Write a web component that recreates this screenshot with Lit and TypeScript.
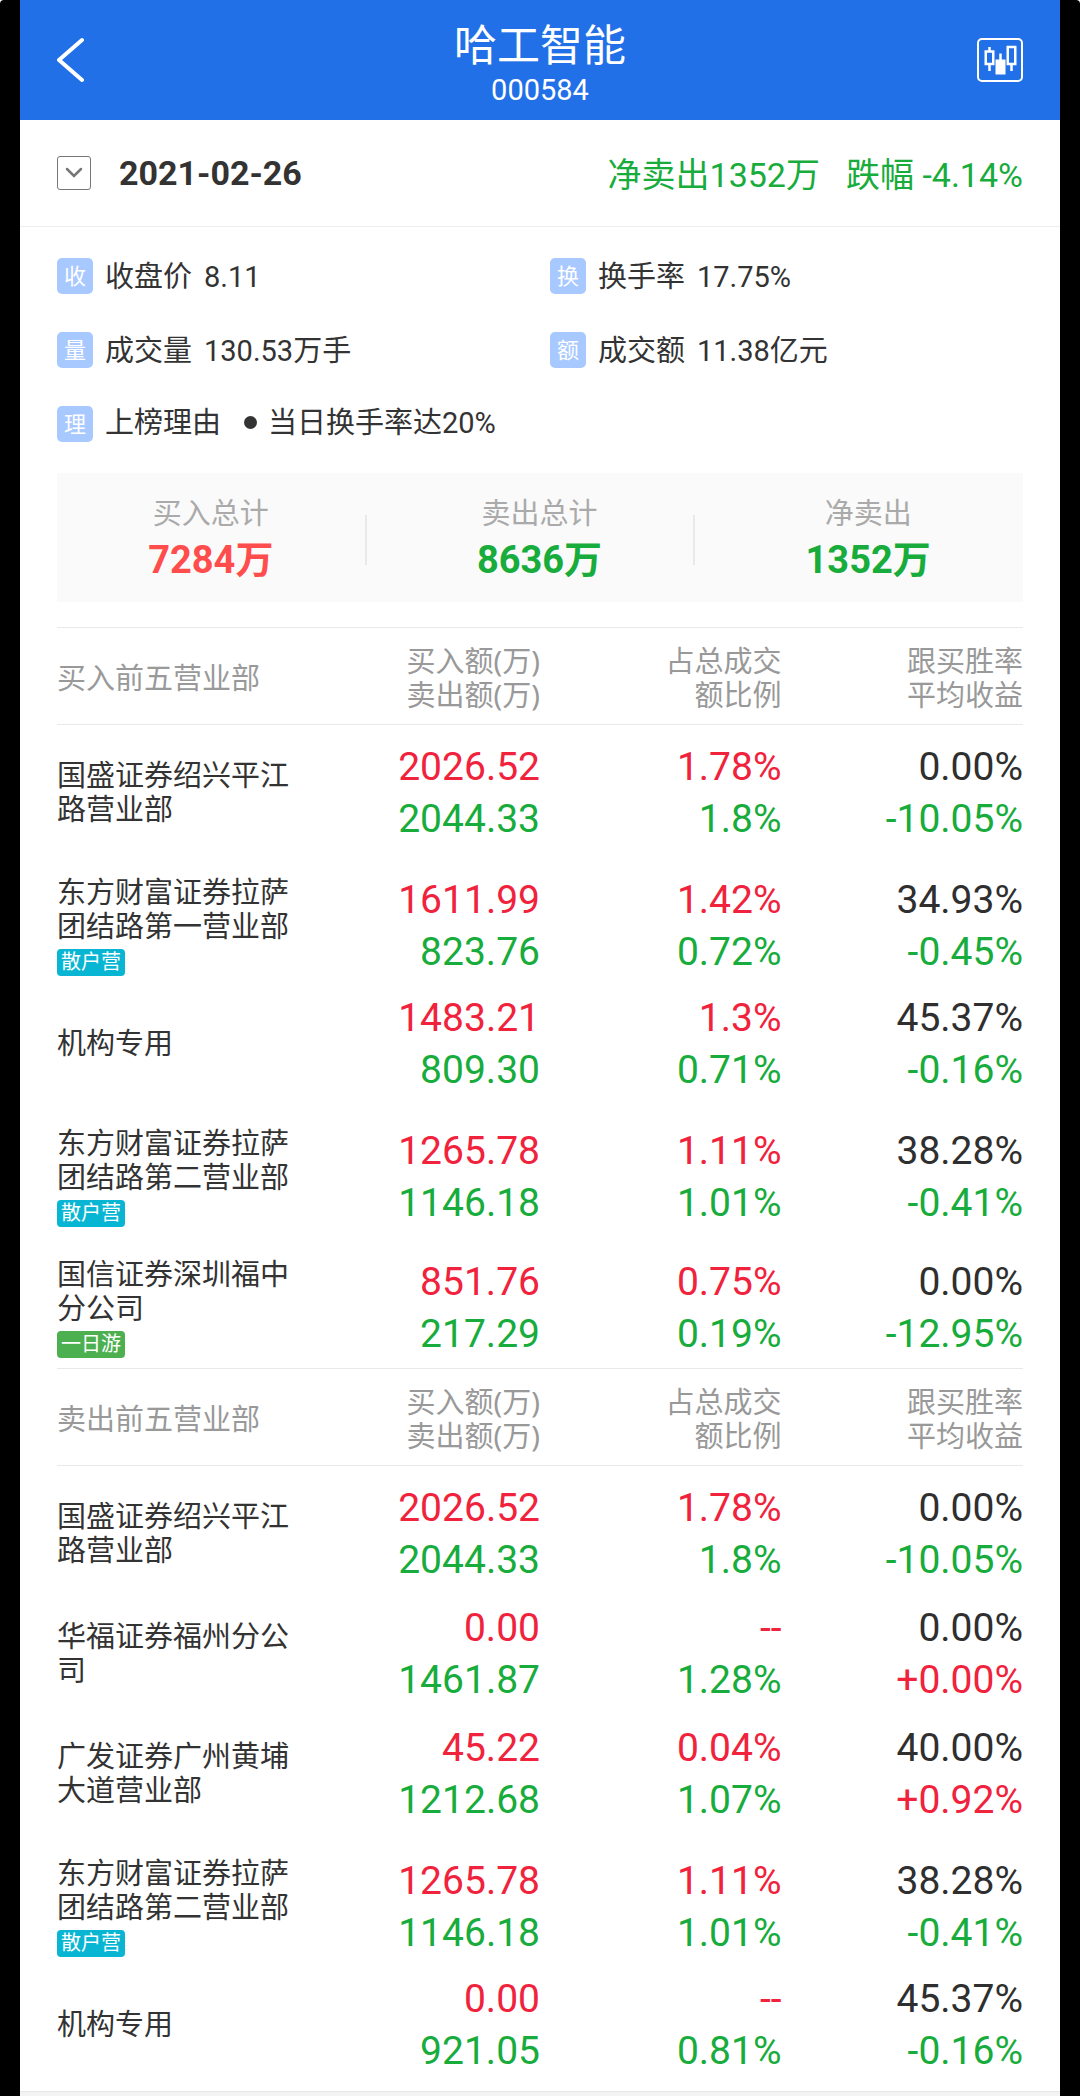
import { LitElement, html, css, nothing } from "lit";
import { customElement, property } from "lit/decorators.js";

type Tag = { text: string; kind: "retail" | "daytrip" };

interface Seat {
  name: string;
  tag?: Tag;
  buy: string;
  sell: string;
  buyShare: string;
  sellShare: string;
  winRate: string;
  avgReturn: string;
}

const RETAIL: Tag = { text: "散户营", kind: "retail" };
const DAYTRIP: Tag = { text: "一日游", kind: "daytrip" };

const BUY_SEATS: Seat[] = [
  { name: "国盛证券绍兴平江路营业部", buy: "2026.52", sell: "2044.33", buyShare: "1.78%", sellShare: "1.8%", winRate: "0.00%", avgReturn: "-10.05%" },
  { name: "东方财富证券拉萨团结路第一营业部", tag: RETAIL, buy: "1611.99", sell: "823.76", buyShare: "1.42%", sellShare: "0.72%", winRate: "34.93%", avgReturn: "-0.45%" },
  { name: "机构专用", buy: "1483.21", sell: "809.30", buyShare: "1.3%", sellShare: "0.71%", winRate: "45.37%", avgReturn: "-0.16%" },
  { name: "东方财富证券拉萨团结路第二营业部", tag: RETAIL, buy: "1265.78", sell: "1146.18", buyShare: "1.11%", sellShare: "1.01%", winRate: "38.28%", avgReturn: "-0.41%" },
  { name: "国信证券深圳福中分公司", tag: DAYTRIP, buy: "851.76", sell: "217.29", buyShare: "0.75%", sellShare: "0.19%", winRate: "0.00%", avgReturn: "-12.95%" },
];

const SELL_SEATS: Seat[] = [
  { name: "国盛证券绍兴平江路营业部", buy: "2026.52", sell: "2044.33", buyShare: "1.78%", sellShare: "1.8%", winRate: "0.00%", avgReturn: "-10.05%" },
  { name: "华福证券福州分公司", buy: "0.00", sell: "1461.87", buyShare: "--", sellShare: "1.28%", winRate: "0.00%", avgReturn: "+0.00%" },
  { name: "广发证券广州黄埔大道营业部", buy: "45.22", sell: "1212.68", buyShare: "0.04%", sellShare: "1.07%", winRate: "40.00%", avgReturn: "+0.92%" },
  { name: "东方财富证券拉萨团结路第二营业部", tag: RETAIL, buy: "1265.78", sell: "1146.18", buyShare: "1.11%", sellShare: "1.01%", winRate: "38.28%", avgReturn: "-0.41%" },
  { name: "机构专用", buy: "0.00", sell: "921.05", buyShare: "--", sellShare: "0.81%", winRate: "45.37%", avgReturn: "-0.16%" },
];

const FACTS = [
  { icon: "收", label: "收盘价", value: "8.11" },
  { icon: "换", label: "换手率", value: "17.75%" },
  { icon: "量", label: "成交量", value: "130.53万手" },
  { icon: "额", label: "成交额", value: "11.38亿元" },
];

const TOTALS = [
  { label: "买入总计", value: "7284万", tone: "hot" },
  { label: "卖出总计", value: "8636万", tone: "down" },
  { label: "净卖出", value: "1352万", tone: "down" },
];

@customElement("seat-table")
export class SeatTable extends LitElement {
  @property() heading = "";
  @property({ attribute: false }) seats: Seat[] = [];

  static styles = css`
    :host {
      display: block;
    }
    table {
      width: 100%;
      table-layout: fixed;
      border-collapse: separate;
      border-spacing: 0;
    }
    th {
      height: 92px;
      padding: 4px 0 0;
      border-top: 1px solid #e9e9e9;
      border-bottom: 1px solid #e9e9e9;
      font-family: "Noto Sans", "Noto Sans CJK SC", sans-serif;
      font-size: 29px;
      line-height: 34px;
      font-weight: 400;
      color: #999;
      text-align: right;
      vertical-align: middle;
    }
    th:first-child {
      text-align: left;
    }
    .line {
      display: block;
    }
    .lead td {
      height: 8px;
      padding: 0;
    }
    td {
      padding: 8px 0;
      text-align: right;
      vertical-align: middle;
      font-size: 39px;
      line-height: 52px;
    }
    .tagged td {
      padding: 21px 0 6px;
    }
    td.seat {
      font-size: 29px;
      line-height: 34px;
      text-align: left;
      color: #333;
    }
    .tag {
      display: block;
      width: fit-content;
      margin-top: 5px;
      padding: 0 4px;
      border-radius: 4px;
      color: #fff;
      font-size: 20px;
      line-height: 27px;
    }
    .retail {
      background: #08b6d4;
    }
    .daytrip {
      background: #4caf50;
    }
    .up {
      color: #f0223c;
    }
    .down {
      color: #17ac3c;
    }
    .flat {
      color: #2f2f2f;
    }
  `;

  render() {
    return html`
      <table>
        <thead>
          <tr>
            <th scope="col">${this.heading}</th>
            <th scope="col">买入额(万)<br />卖出额(万)</th>
            <th scope="col">占总成交<br />额比例</th>
            <th scope="col">跟买胜率<br />平均收益</th>
          </tr>
        </thead>
        <tbody>
          <tr class="lead" aria-hidden="true"><td colspan="4"></td></tr>
          ${this.seats.map(
            (s) => html`
              <tr class=${s.tag ? "tagged" : "plain"}>
                <td class="seat">
                  ${s.name}${s.tag ? html`<span class="tag ${s.tag.kind}">${s.tag.text}</span>` : nothing}
                </td>
                <td><span class="line up">${s.buy}</span><span class="line down">${s.sell}</span></td>
                <td><span class="line up">${s.buyShare}</span><span class="line down">${s.sellShare}</span></td>
                <td>
                  <span class="line flat">${s.winRate}</span>
                  <span class="line ${s.avgReturn.startsWith("+") ? "up" : "down"}">${s.avgReturn}</span>
                </td>
              </tr>
            `
          )}
        </tbody>
      </table>
    `;
  }
}

@customElement("app-root")
export class AppRoot extends LitElement {
  static styles = css`
    :host {
      display: block;
      background: #fff;
      font-family: Roboto, "Noto Sans CJK SC", sans-serif;
      color: #333;
    }
    .frame {
      box-sizing: border-box;
      min-height: 100vh;
      padding: 0 20px;
      background: #000;
      border-radius: 4px 4px 0 0;
      display: flex;
      flex-direction: column;
    }
    .screen {
      flex: 1;
      display: flex;
      flex-direction: column;
      background: #fff;
    }
    button {
      display: flex;
      padding: 0;
      border: 0;
      background: none;
      color: inherit;
      font: inherit;
    }
    svg {
      display: block;
      fill: none;
      stroke: currentColor;
    }
    header {
      display: grid;
      grid-template-columns: 1fr auto 1fr;
      align-items: center;
      height: 120px;
      padding: 0 37px;
      background: #2170e7;
      color: #fff;
    }
    .chart {
      justify-self: end;
    }
    .title {
      padding-top: 8px;
      text-align: center;
    }
    h1 {
      margin: 0;
      font-size: 43px;
      line-height: 52px;
      font-weight: 400;
    }
    .code {
      margin: 0;
      font-size: 29px;
      line-height: 36px;
    }
    .day {
      display: flex;
      align-items: center;
      height: 106px;
      padding: 0 37px;
      border-bottom: 1px solid #eee;
    }
    .toggle {
      box-sizing: border-box;
      width: 34px;
      height: 34px;
      margin-right: 28px;
      border: 1px solid #777;
      border-radius: 3px;
      align-items: center;
      justify-content: center;
      color: #777;
    }
    .date {
      flex: 1;
      font-size: 34px;
      font-weight: 700;
    }
    .moves {
      display: flex;
      gap: 26px;
      padding-top: 3px;
      font-size: 34px;
      line-height: 50px;
      color: #17ac3c;
    }
    .body {
      padding: 0 37px;
    }
    .facts {
      display: grid;
      grid-template-columns: 1fr 1fr;
      column-gap: 20px;
      row-gap: 38px;
      padding: 31px 0 0;
      font-size: 29px;
      line-height: 38px;
    }
    .fact {
      display: flex;
      gap: 12px;
      height: 36px;
    }
    .reason {
      grid-column: 1 / -1;
    }
    .glyph {
      width: 36px;
      height: 36px;
      border-radius: 5px;
      background: #a8c9ff;
      color: #fff;
      font-size: 22px;
      text-align: center;
    }
    .reason .text {
      display: flex;
      align-items: center;
      gap: 11px;
      height: 33px;
    }
    .dot {
      width: 13px;
      height: 13px;
      margin-left: 12px;
      border-radius: 50%;
      background: #333;
    }
    .totals {
      display: grid;
      grid-template-columns: repeat(3, 1fr);
      column-gap: 20px;
      margin: 31px 0 25px;
      padding: 21px 0 16px;
      background: #fafafa;
      text-align: center;
    }
    .total {
      display: grid;
      grid-template-columns: 1fr 1px;
      align-items: center;
    }
    .total .label {
      display: block;
      font-size: 29px;
      line-height: 40px;
      color: #aaa;
    }
    .total strong {
      display: block;
      font-size: 38px;
      line-height: 52px;
    }
    .rule {
      width: 2px;
      height: 50px;
      background: #e9e9e9;
    }
    .hot {
      color: #ff4d4d;
    }
    .down {
      color: #17ac3c;
    }
    .buys {
      margin-bottom: 2px;
    }
    .sells {
      margin-bottom: 6px;
    }
    .tail {
      flex: 1;
      min-height: 4px;
      border-top: 1px solid #e6e6e6;
      background: #f3f3f3;
    }
  `;

  render() {
    return html`
      <div class="frame">
        <main class="screen">
          <header>
            <button class="back" aria-label="返回">
              <svg width="30" height="46" viewBox="0 0 30 46" stroke-width="4" stroke-linecap="round" stroke-linejoin="round">
                <path d="M25 3 2 23l23 20" />
              </svg>
            </button>
            <div class="title">
              <h1>哈工智能</h1>
              <p class="code">000584</p>
            </div>
            <button class="chart" aria-label="K线图">
              <svg width="46" height="44" viewBox="0 0 46 44" stroke-width="2.500">
                <rect x="1" y="1" width="44" height="42" rx="4" stroke-width="2" />
                <path d="M12.500 9v4M12.500 26v7M8.750 13.500h7.500v12.500h-7.500zM34.500 26v7M30.750 9h7.500v17h-7.500zM23.500 15.500v8" />
                <path d="M18.500 21.500h10v15h-10z" fill="currentColor" stroke="none" />
              </svg>
            </button>
          </header>
          <section class="day">
            <button class="toggle" aria-label="选择日期">
              <svg width="18" height="12" viewBox="0 0 18 12" stroke-width="2.500" stroke-linecap="round">
                <path d="M2 2l7 7 7-7" />
              </svg>
            </button>
            <time class="date" datetime="2021-02-26">2021-02-26</time>
            <div class="moves"><span>净卖出1352万</span><span>跌幅 -4.14%</span></div>
          </section>
          <div class="body">
            <section class="facts">
              ${FACTS.map(
                (f) => html`
                  <div class="fact">
                    <span class="glyph">${f.icon}</span><span>${f.label}</span><span>${f.value}</span>
                  </div>
                `
              )}
              <div class="fact reason">
                <span class="glyph">理</span>
                <span class="text"><span>上榜理由</span><span class="dot"></span><span>当日换手率达20%</span></span>
              </div>
            </section>
            <section class="totals">
              ${TOTALS.map(
                (t, i) => html`
                  <div class="total">
                    <div><span class="label">${t.label}</span><strong class=${t.tone}>${t.value}</strong></div>
                    ${i < TOTALS.length - 1 ? html`<span class="rule"></span>` : nothing}
                  </div>
                `
              )}
            </section>
            <seat-table class="buys" heading="买入前五营业部" .seats=${BUY_SEATS}></seat-table>
            <seat-table class="sells" heading="卖出前五营业部" .seats=${SELL_SEATS}></seat-table>
          </div>
          <div class="tail"></div>
        </main>
      </div>
    `;
  }
}
